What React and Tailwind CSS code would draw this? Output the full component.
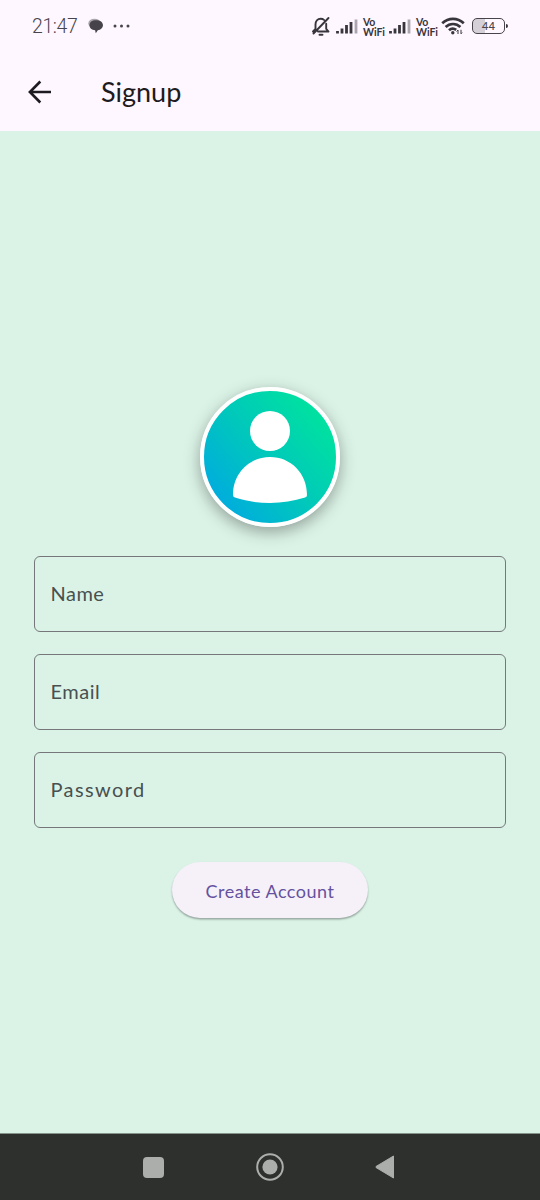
function Signal() {
  return (
    <svg className="block h-4 w-[22px]" viewBox="0 0 22 16" fill="none" strokeWidth="2.8" strokeLinecap="butt">
      <path d="M1.500 12v2.500M6 9.500v5M10.500 6v8.500M15 3v11.500" stroke="#39353c" />
      <path d="M20 .5v14" stroke="#aaa5ae" />
    </svg>
  );
}

function VoWifi() {
  return (
    <div className="w-[22px] whitespace-nowrap text-[10.5px] font-bold leading-[10px] tracking-[-0.1px] text-[#39353c]">
      Vo<br />WiFi
    </div>
  );
}

function StatusBar() {
  return (
    <div className="flex h-[52px] items-center pl-8 pr-8 text-[#48444b]">
      <span className="mt-[2px] w-[46px] whitespace-nowrap font-['Roboto',sans-serif] text-[19.5px] font-light leading-6 tracking-[-0.4px]">21:47</span>
      <svg className="ml-[10px] h-4 w-4" viewBox="0 0 16 16">
        <ellipse cx="6.5" cy="5.5" rx="6.2" ry="4.8" fill="#aaa5ad" />
        <path d="M8 2.2c4.2 0 7 1.9 7 5 0 2.7-2.2 4.5-5.2 5l-2 3-.7-3C3.5 11.8 1.5 10 1.5 7.2c0-3.1 2.4-5 6.5-5Z" fill="#47434a" />
      </svg>
      <svg className="ml-[9px] h-1 w-[18px]" viewBox="0 0 18 4" fill="#48444b">
        <circle cx="2" cy="2" r="1.5" />
        <circle cx="8.5" cy="2" r="1.5" />
        <circle cx="15" cy="2" r="1.5" />
      </svg>
      <div className="ml-auto flex items-center">
        <svg className="h-5 w-5" viewBox="0 0 20 20" fill="none" stroke="#39353c" strokeWidth="1.900" strokeLinecap="round" strokeLinejoin="round">
          <path d="M2.5 17.500 17.500 2M4.5 13V8.5c0-3.4 2-5.800 5.200-5.800 1.300 0 2.400.4 3.300 1.200M15.200 7.800v5l2.300 2.700H7M2 15.500 4.500 13M8.500 18.700h3" />
        </svg>
        <div className="ml-[5px] mt-px"><Signal /></div>
        <div className="ml-[5px] mt-px"><VoWifi /></div>
        <div className="ml-1 mt-px"><Signal /></div>
        <div className="ml-[5px] mt-px"><VoWifi /></div>
        <svg className="ml-[3px] h-[18px] w-[24px]" viewBox="0 0 24 18" fill="none" stroke="#39353c" strokeWidth="2.7" strokeLinecap="butt">
          <path d="M1.200 6.200C7.500.4 16.500.4 22.800 6.200M4.600 10c4.200-4 10.600-4 14.800 0M8 13.300c2.200-2 5-2 7.200-.4" />
          <circle cx="11.8" cy="15.8" r="1.7" fill="#39353c" stroke="none" />
          <path d="M17 13v4m-1.400-2.500 1.400-1.500M20 12.800v4m0 0 1.200-1.200" strokeWidth="1" />
        </svg>
        <div className="ml-[7px] flex h-4 w-[33px] items-center justify-center rounded-[5px] border-[1.5px] border-[#48444b] bg-linear-to-r from-[#d5d0d8] from-40% to-transparent to-40%">
          <span className="font-['Roboto',sans-serif] text-[11.5px] leading-3 tracking-[0.3px]">44</span>
        </div>
        <div className="ml-[1px] h-1 w-[2px] rounded-r bg-[#39353c]" />
      </div>
    </div>
  );
}

function Field({ label, tracking }) {
  return (
    <label className="flex h-[76px] items-center rounded-[6px] border-[1.4px] border-[#75777a] px-[15.500px] pb-[2px] text-[20px] text-[#485050]">
      <span className={tracking}>{label}</span>
    </label>
  );
}

function Avatar() {
  return (
    <div className="h-[140px] w-[140px] rounded-full border-4 border-white bg-linear-[50deg,#00a6e5_5%,#00c9ba_50%,#00e69b_92%] shadow-[0_5px_16px_rgba(0,0,0,0.34)]">
      <svg className="block h-[132px] w-[132px]" viewBox="0 0 132 132" fill="white">
        <circle cx="66" cy="40" r="20" />
        <path d="M29 104C29 82 45.500 66 66 66s37 16 37 38q0 2-2 2.600c-22 7.200-48 7.200-70 0q-2-.6-2-2.600Z" />
      </svg>
    </div>
  );
}

export default function App() {
  return (
    <main className="flex h-[1200px] w-[540px] flex-col overflow-hidden bg-[#dbf3e7] font-['Lato',sans-serif]">
      <header className="h-[131px] shrink-0 bg-[#fef7ff]">
        <StatusBar />
        <div className="flex h-[79px] items-center pl-7">
          <svg className="h-6 w-6" viewBox="0 0 24 24" fill="none" stroke="#1d1b20" strokeWidth="2.6">
            <path d="M12.300 1.500 1.900 12l10.400 10.500M2 12h21" />
          </svg>
          <h1 className="ml-[49px] text-[27px] leading-8 text-[#1d1b20]">Signup</h1>
        </div>
      </header>
      <section className="flex flex-1 flex-col items-center px-[34px] pt-[256px]">
        <Avatar />
        <div className="mt-[28.600px] flex w-full flex-col gap-[22.400px]">
          <Field label="Name" tracking="tracking-[0.5px]" />
          <Field label="Email" tracking="tracking-[0.5px]" />
          <Field label="Password" tracking="tracking-[1.4px]" />
        </div>
        <button className="mt-[33.4px] h-14 w-[196px] rounded-full bg-[#f6f1f9] pt-[3px] text-[18px] tracking-[0.5px] text-[#65529f] shadow-[0_1.5px_2px_rgba(0,0,0,0.32)]">Create Account</button>
      </section>
      <nav className="flex h-[67px] shrink-0 items-center justify-between border-t border-[#84948b] bg-[#2d302d] pl-[143px] pr-[145px]">
        <div className="h-[21px] w-[21px] rounded-[4px] bg-[#abaeab]" />
        <svg className="h-7 w-7" viewBox="0 0 28 28">
          <circle cx="14" cy="14" r="12.800" fill="none" stroke="#abaeab" strokeWidth="2" />
          <circle cx="14" cy="14" r="7.600" fill="#abaeab" />
        </svg>
        <svg className="h-6 w-5" viewBox="0 0 20 24">
          <path d="M18.500 1v22L1 12.500v-1Z" fill="#abaeab" stroke="#abaeab" strokeLinejoin="round" />
        </svg>
      </nav>
    </main>
  );
}
